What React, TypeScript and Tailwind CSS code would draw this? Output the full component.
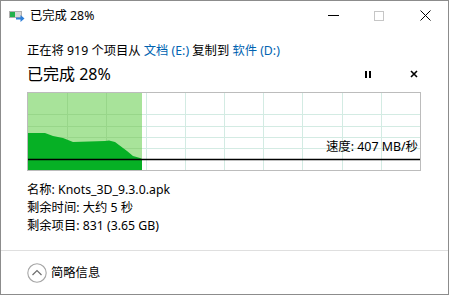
import React from 'react';

const GRID_X = [1, 2, 3, 4, 5, 6, 7, 8, 9].map((k) => Math.round(k * 39.2));
const GRID_Y = [21, 33, 44, 55];
const DONE_W = 114;

function CopyIcon() {
  return (
    <svg width="16" height="12" viewBox="0 0 16 12">
      <rect x="0.5" y="1.5" width="12" height="6" fill="#d8d8d8" stroke="#b0b0b0" />
      <rect x="1" y="2" width="5" height="5" fill="#22b14c" />
      <path d="M7 7.5h4.5V5l4 3.5-4 3.5V9.5H7z" fill="#2f7fd8" />
    </svg>
  );
}

function SpeedChart() {
  return (
    <div className="relative w-[394px] h-[79px] border border-[#bcbcbc] bg-white">
      <svg width="392" height="77" viewBox="0 0 392 77" className="block">
        {GRID_X.map((x) => (
          <line key={'v' + x} x1={x + 0.5} y1="0" x2={x + 0.5} y2="77" stroke="#d3ebe3" />
        ))}
        {GRID_Y.map((y) => (
          <line key={'h' + y} x1="0" y1={y + 0.5} x2="392" y2={y + 0.5} stroke="#d3ebe3" />
        ))}
        <rect x="0" y="0" width={DONE_W} height="77" fill="#a8e39a" />
        {GRID_X.filter((x) => x < DONE_W).map((x) => (
          <line key={'gv' + x} x1={x + 0.5} y1="0" x2={x + 0.5} y2="77" stroke="#98d68a" />
        ))}
        {GRID_Y.map((y) => (
          <line key={'gh' + y} x1="0" y1={y + 0.5} x2={DONE_W} y2={y + 0.5} stroke="#98d68a" />
        ))}
        <polygon
          points="0,40 17,40 25,43 35,45 45,49 77,48 81,47.5 87,49 99,58 105,63 112,65 114,66 114,77 0,77"
          fill="#06b025"
        />
        <line x1="0" y1="66.5" x2="392" y2="66.5" stroke="#000" strokeWidth="1.3" />
      </svg>
      <span className="absolute right-[2px] top-[46px] text-[12.4px] leading-[16px] text-black">
        速度: 407 MB/秒
      </span>
    </div>
  );
}

export default function App() {
  return (
    <div className="w-[449px] h-[295px] border border-[#8c8c8c] bg-white flex flex-col text-black font-['Noto_Sans','Noto_Sans_CJK_SC',sans-serif]">
      {/* Title bar */}
      <div className="flex items-center h-[29px]">
        <div className="pl-[8px] pr-[5px] pt-[1px]">
          <CopyIcon />
        </div>
        <span className="text-[12.3px] leading-[16px]">已完成 28%</span>
        <div className="ml-auto flex">
          <div className="w-[46px] h-[29px] flex items-center justify-center">
            <div className="w-[11px] h-px bg-black" />
          </div>
          <div className="w-[46px] h-[29px] flex items-center justify-center">
            <div className="w-[10px] h-[10px] border border-[#c6c6c6]" />
          </div>
          <div className="w-[46px] h-[29px] flex items-center justify-center">
            <svg width="11" height="11" viewBox="0 0 11 11">
              <path d="M0.5 0.5l10 10M10.5 0.5l-10 10" stroke="#000" strokeWidth="1" />
            </svg>
          </div>
        </div>
      </div>

      {/* Body */}
      <div className="px-[26px] pt-[12px] flex flex-col">
        <div className="text-[12.3px] leading-[18px]">
          正在将 919 个项目从 <span className="text-[#0063b1]">文档 (E:)</span> 复制到{' '}
          <span className="text-[#0063b1]">软件 (D:)</span>
        </div>
        <div className="mt-[2px] flex items-center h-[24px]">
          <span className="text-[16px] leading-[24px]">已完成 28%</span>
          <div className="ml-auto flex items-center gap-[30px]">
            <button className="w-[16px] h-[16px] flex items-center justify-center gap-[2px]">
              <span className="w-[2px] h-[7px] bg-black" />
              <span className="w-[2px] h-[7px] bg-black" />
            </button>
            <button className="w-[16px] h-[16px] flex items-center justify-center">
              <svg width="8" height="8" viewBox="0 0 8 8">
                <path d="M1 1l6 6M7 1l-6 6" stroke="#000" strokeWidth="1.6" />
              </svg>
            </button>
          </div>
        </div>
        <div className="mt-[6px]">
          <SpeedChart />
        </div>
        <div className="mt-[10px] text-[12.3px] leading-[18px]">
          <div>名称: Knots_3D_9.3.0.apk</div>
          <div>剩余时间: 大约 5 秒</div>
          <div>剩余项目: 831 (3.65 GB)</div>
        </div>
      </div>

      <div className="mt-[15px] h-px bg-[#dfdfdf]" />

      {/* Footer */}
      <div className="flex-1 flex items-center px-[26px] gap-[4px]">
        <svg width="20" height="20" viewBox="0 0 20 20">
          <circle cx="10" cy="10" r="9.2" fill="none" stroke="#a6a6a6" strokeWidth="1.1" />
          <path d="M5.5 12l4.5-4.5 4.5 4.5" fill="none" stroke="#6e6e6e" strokeWidth="1.2" />
        </svg>
        <span className="text-[12.3px] leading-[18px]">简略信息</span>
      </div>
    </div>
  );
}
